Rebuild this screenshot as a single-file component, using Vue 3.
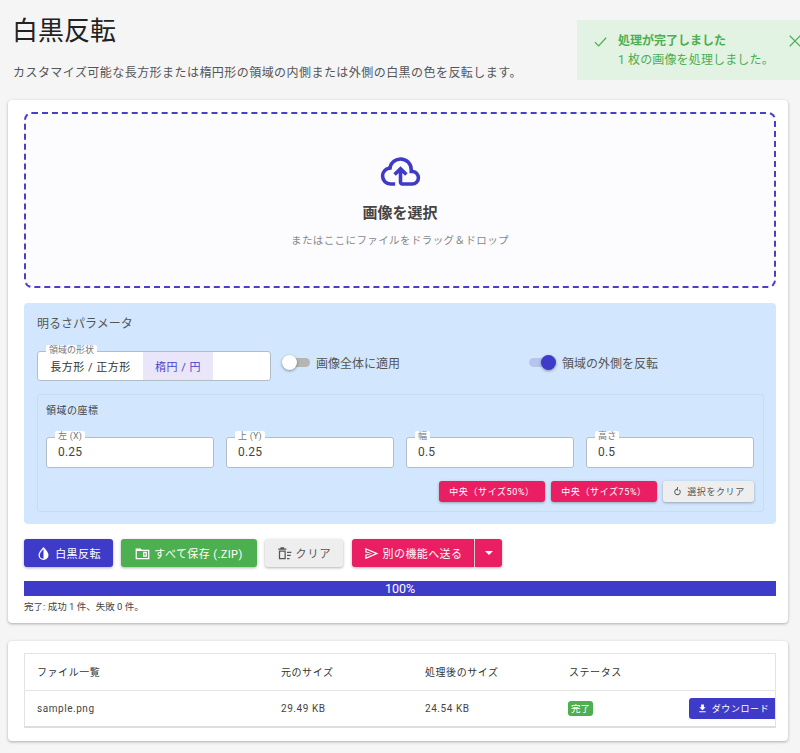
<template>
  <div class="page">
    <h1 class="title">白黒反転</h1>
    <p class="desc">カスタマイズ可能な長方形または楕円形の領域の内側または外側の白黒の色を反転します。</p>

    <div class="toast">
      <svg class="toast-check" viewBox="0 0 24 24"><path d="M3 13l6 6L21 6" fill="none" stroke="currentColor" stroke-width="2"/></svg>
      <div class="toast-text">
        <div class="toast-head">処理が完了しました</div>
        <div class="toast-body">1 枚の画像を処理しました。</div>
      </div>
      <svg class="toast-close" viewBox="0 0 24 24"><path d="M3 3l18 18M21 3L3 21" fill="none" stroke="currentColor" stroke-width="2"/></svg>
    </div>

    <section class="card main-card">
      <div class="dropzone">
        <svg class="cloud" viewBox="0 0 24 24"><path fill="currentColor" d="M6.5 20Q4.22 20 2.61 18.43 1 16.85 1 14.58 1 12.63 2.17 11.1 3.35 9.57 5.25 9.15 5.88 6.85 7.75 5.43 9.63 4 12 4 14.93 4 16.96 6.04 19 8.07 19 11 20.73 11.2 21.86 12.5 23 13.78 23 15.5 23 17.38 21.69 18.69 20.38 20 18.5 20H13Q12.18 20 11.59 19.41 11 18.83 11 18V12.85L9.4 14.4L8 13L12 9L16 13L14.6 14.4L13 12.85V18H18.5Q19.55 18 20.27 17.27 21 16.55 21 15.5 21 14.45 20.27 13.73 19.55 13 18.5 13H17V11Q17 8.93 15.54 7.46 14.07 6 12 6 9.93 6 8.46 7.46 7 8.93 7 11H6.5Q5.05 11 4.03 12.03 3 13.05 3 14.5 3 15.95 4.03 17 5.05 18 6.5 18H9V20Z"/></svg>
        <div class="drop-title">画像を選択</div>
        <div class="drop-sub">またはここにファイルをドラッグ＆ドロップ</div>
      </div>

      <div class="params">
        <div class="params-title">明るさパラメータ</div>
        <div class="option-row">
          <div class="shape-field">
            <span class="float-label">領域の形状</span>
            <button class="shape-btn">長方形 / 正方形</button>
            <button class="shape-btn active">楕円 / 円</button>
          </div>
          <label class="switch-wrap first">
            <span class="switch"><span class="knob"></span></span>
            画像全体に適用
          </label>
          <label class="switch-wrap second">
            <span class="switch on"><span class="knob"></span></span>
            領域の外側を反転
          </label>
        </div>

        <div class="coords">
          <div class="coords-title">領域の座標</div>
          <div class="coord-grid">
            <div v-for="c in coords" :key="c.label" class="coord-field">
              <span class="float-label">{{ c.label }}</span>
              {{ c.value }}
            </div>
          </div>
          <div class="coord-actions">
            <button class="btn small pink w106">中央（サイズ50%）</button>
            <button class="btn small pink w106">中央（サイズ75%）</button>
            <button class="btn small grey w91">
              <svg class="ico-small" viewBox="0 0 24 24"><path fill="currentColor" d="M13 2h-2v4.100C7.600 6.600 5 9.500 5 13c0 3.900 3.100 7 7 7s7-3.100 7-7c0-2.100-.9-4-2.400-5.300l-1.400 1.400C16.300 10 17 11.400 17 13c0 2.800-2.200 5-5 5s-5-2.200-5-5c0-2.400 1.700-4.400 4-4.900V10h2z"/></svg>
              選択をクリア
            </button>
          </div>
        </div>
      </div>

      <div class="actions">
        <button class="btn indigo">
          <svg class="ico" viewBox="0 0 24 24"><path fill="currentColor" d="M12 1.500C7.500 6.500 4 10.200 4 14.500a8 8 0 0 0 16 0c0-4.300-3.500-8-8-13zm0 3.300V20.500a6 6 0 0 1-6-6c0-2.900 2.500-6 6-9.700z"/></svg>
          白黒反転
        </button>
        <button class="btn green">
          <svg class="ico" viewBox="0 0 24 24"><path fill="currentColor" d="M1 4h8l2 2h12v15H1zm2 4v11h18V8zm10 1h6v8h-6zm2 2v4h2v-4z"/></svg>
          すべて保存 (.ZIP)
        </button>
        <button class="btn grey">
          <svg class="ico" viewBox="0 0 24 24"><path fill="currentColor" d="M6 2h5l1 2h3v2H2V4h3zM3 7h11v14H3zm2 2v10h7V9zm11 0h7v2h-7zm0 5h6v2h-6zm0 5h4v2h-4z"/></svg>
          クリア
        </button>
        <div class="split">
          <button class="btn pink send">
            <svg class="ico" viewBox="0 0 24 24"><path fill="currentColor" d="M2 3l21 9-21 9v-7.500L12 12 2 10.500zm2 3.100v2.700l9 3.200-9 3.200v2.700L18 12z"/></svg>
            別の機能へ送る
          </button>
          <button class="btn pink caret"><span class="caret-shape"></span></button>
        </div>
      </div>

      <div class="progress">100%</div>
      <div class="progress-note">完了: 成功 1 件、失敗 0 件。</div>
    </section>

    <section class="card list-card">
      <div class="table">
        <div class="row head">
          <span class="col-name">ファイル一覧</span>
          <span class="col-size">元のサイズ</span>
          <span class="col-size">処理後のサイズ</span>
          <span class="col-status">ステータス</span>
        </div>
        <div class="row body">
          <span class="col-name">sample.png</span>
          <span class="col-size">29.49 KB</span>
          <span class="col-size">24.54 KB</span>
          <span class="col-status"><span class="badge">完了</span></span>
          <button class="btn small indigo download">
            <svg class="ico-small" viewBox="0 0 24 24"><path fill="currentColor" d="M5 20h14v-2H5zM19 9h-4V3H9v6H5l7 7z"/></svg>
            ダウンロード
          </button>
        </div>
      </div>
    </section>
  </div>
</template>

<script setup>
const coords = [
  { label: '左 (X)', value: '0.25' },
  { label: '上 (Y)', value: '0.25' },
  { label: '幅', value: '0.5' },
  { label: '高さ', value: '0.5' }
];
</script>

<style>
html, body { background: #f5f5f5; }
body { overflow: hidden; }
</style>

<style scoped>
.page {
  position: relative;
  box-sizing: border-box;
  width: 800px;
  height: 753px;
  overflow: hidden;
  padding: 13px 12px 0 8px;
  font-family: Roboto, "Noto Sans CJK JP", sans-serif;
  color: #333;
}
.title {
  margin: 0 0 0 4px;
  font-size: 26px;
  line-height: 36px;
  font-weight: 400;
  color: #222;
}
.desc {
  margin: 15px 0 18px 5px;
  font-size: 12px;
  line-height: 18px;
  letter-spacing: 0.45px;
  color: #555;
}
.toast {
  position: absolute;
  left: 577px;
  top: 20px;
  width: 223px;
  height: 60px;
  box-sizing: border-box;
  display: flex;
  padding: 12px 0 0 16px;
  background: #e2f2e3;
  color: #4caf50;
  font-size: 12px;
  line-height: 19px;
  overflow: hidden;
}
.toast-check { width: 15px; height: 15px; margin: 2px 10px 0 0; flex: none; }
.toast-text { flex: none; width: 170px; }
.toast-head { font-weight: 700; }
.toast-body { letter-spacing: 0.15px; }
.toast-close { width: 14px; height: 14px; margin: 2px 0 0 0; flex: none; }
.card {
  background: #fff;
  border-radius: 4px;
  box-shadow: 0 1px 3px rgba(0, 0, 0, 0.3);
}
.main-card {
  width: 780px;
  height: 523px;
  box-sizing: border-box;
  padding: 12px 12px 0 16px;
}
.dropzone {
  box-sizing: border-box;
  height: 176px;
  border: 2px dashed #4a3fc9;
  border-radius: 8px;
  background: #fcfcfe;
  display: flex;
  flex-direction: column;
  align-items: center;
  padding-top: 36px;
}
.cloud { width: 43px; height: 43px; color: #3f3bc4; }
.drop-title {
  margin-top: 10px;
  font-size: 15px;
  line-height: 20px;
  font-weight: 700;
  color: #444;
}
.drop-sub {
  margin-top: 10px;
  font-size: 10.5px;
  line-height: 16px;
  letter-spacing: 0.4px;
  color: #888;
}
.params {
  box-sizing: border-box;
  height: 221px;
  margin-top: 15px;
  padding: 13px 12px 0 13px;
  background: #d2e7fd;
  border-radius: 4px;
}
.params-title { font-size: 12px; line-height: 17px; color: #555; }
.option-row { display: flex; align-items: flex-start; margin-top: 18px; height: 30px; }
.shape-field {
  position: relative;
  box-sizing: border-box;
  width: 234px;
  height: 30px;
  display: flex;
  background: #fff;
  border: 1px solid #b3bdc7;
  border-radius: 3px;
}
.float-label {
  position: absolute;
  left: 8px;
  top: -7px;
  padding: 0 3px;
  background: #fff;
  border-radius: 2px 2px 0 0;
  font-size: 9px;
  line-height: 11px;
  color: #777;
}
.shape-btn {
  border: 0;
  padding: 0 0 1px;
  width: 105px;
  background: transparent;
  font: inherit;
  font-size: 11px;
  letter-spacing: 0.5px;
  white-space: nowrap;
  color: #333;
}
.shape-btn.active {
  width: 70px;
  background: #e8e6f8;
  color: #4a3fc9;
}
.switch-wrap {
  display: flex;
  align-items: center;
  gap: 6px;
  height: 22px;
  font-size: 12px;
  color: #555;
}
.switch-wrap.first { margin-left: 12px; width: 246px; }
.switch {
  position: relative;
  display: block;
  width: 27px;
  height: 9px;
  border-radius: 5px;
  background: #b5b5b5;
}
.knob {
  position: absolute;
  left: -1px;
  top: -3px;
  width: 15px;
  height: 15px;
  border-radius: 50%;
  background: #fff;
  box-shadow: 0 1px 3px rgba(0, 0, 0, 0.4);
}
.switch.on { background: #b6c5ee; }
.switch.on .knob { left: 12px; background: #3f3bc9; }
.coords {
  box-sizing: border-box;
  height: 118px;
  margin-top: 13px;
  padding: 9px 9px 0 8px;
  border: 1px solid #c8deef;
  border-radius: 3px;
}
.coords-title { font-size: 10px; line-height: 14px; letter-spacing: 0.5px; color: #444; }
.coord-grid {
  display: grid;
  grid-template-columns: repeat(4, 168px);
  gap: 12px;
  margin-top: 19px;
}
.coord-field {
  position: relative;
  box-sizing: border-box;
  height: 31px;
  padding-left: 11px;
  background: #fff;
  border: 1px solid #b3bdc7;
  border-radius: 3px;
  font-size: 12px;
  line-height: 29px;
  letter-spacing: 0.2px;
  color: #444;
}
.coord-actions {
  display: flex;
  justify-content: flex-end;
  gap: 6px;
  margin-top: 13px;
}
.btn {
  display: inline-flex;
  align-items: center;
  justify-content: center;
  gap: 4px;
  height: 28px;
  padding: 0 12px;
  border: 0;
  border-radius: 3px;
  font: inherit;
  font-size: 11px;
  letter-spacing: 0.4px;
  white-space: nowrap;
  color: #fff;
  box-shadow: 0 1px 3px rgba(0, 0, 0, 0.3);
}
.btn.small { height: 21px; padding: 0; font-size: 9px; letter-spacing: 0.6px; }
.w106 { width: 106px; }
.w91 { width: 91px; }
.indigo { background: #3f3bc9; }
.green { background: #4caf50; }
.pink { background: #e91e63; }
.grey { background: #eeeeee; color: #555; }
.ico { width: 15px; height: 15px; flex: none; }
.ico-small { width: 11px; height: 11px; flex: none; }
.actions { display: flex; margin-top: 15px; gap: 8px; }
.actions > .btn:nth-child(1) { width: 89px; }
.actions > .btn:nth-child(2) { width: 136px; }
.actions > .btn:nth-child(3) { width: 78px; margin-right: 1px; letter-spacing: 1px; }
.split { display: flex; gap: 1px; }
.send { width: 122px; border-radius: 3px 0 0 3px; }
.caret { width: 27px; padding: 0; border-radius: 0 3px 3px 0; }
.caret-shape {
  border-left: 4px solid transparent;
  border-right: 4px solid transparent;
  border-top: 4px solid #fff;
}
.progress {
  height: 15px;
  margin-top: 14px;
  background: #3f3bc9;
  color: #fff;
  text-align: center;
  font-size: 12.5px;
  line-height: 16px;
}
.progress-note { margin-top: 4px; font-size: 9.5px; line-height: 14px; color: #444; }
.list-card {
  width: 780px;
  height: 100px;
  margin-top: 18px;
  box-sizing: border-box;
  padding: 12px 12px 0 16px;
}
.table {
  height: 75px;
  box-sizing: border-box;
  border: 1px solid #e3e3e3;
  border-bottom: 2px solid #ddd;
  overflow: hidden;
  font-size: 10px;
  letter-spacing: 0.55px;
  color: #444;
}
.row { display: flex; align-items: center; height: 37px; padding: 0 0 2px 12px; box-sizing: border-box; }
.row.head { height: 37px; padding-bottom: 2px; border-bottom: 1px solid #e3e3e3; color: #333; }
.col-name { flex: none; width: 244px; }
.col-size { flex: none; width: 144px; }
.col-status { flex: none; width: 120px; }
.badge {
  display: inline-block;
  margin-left: -1px;
  padding: 0 3px;
  background: #4caf50;
  color: #fff;
  border-radius: 3px;
  font-size: 9.5px;
  line-height: 15px;
  letter-spacing: 0;
}
.download {
  flex: none;
  width: 88px;
  border-radius: 3px 0 0 3px;
  box-shadow: none;
  letter-spacing: 0.9px;
}
</style>
